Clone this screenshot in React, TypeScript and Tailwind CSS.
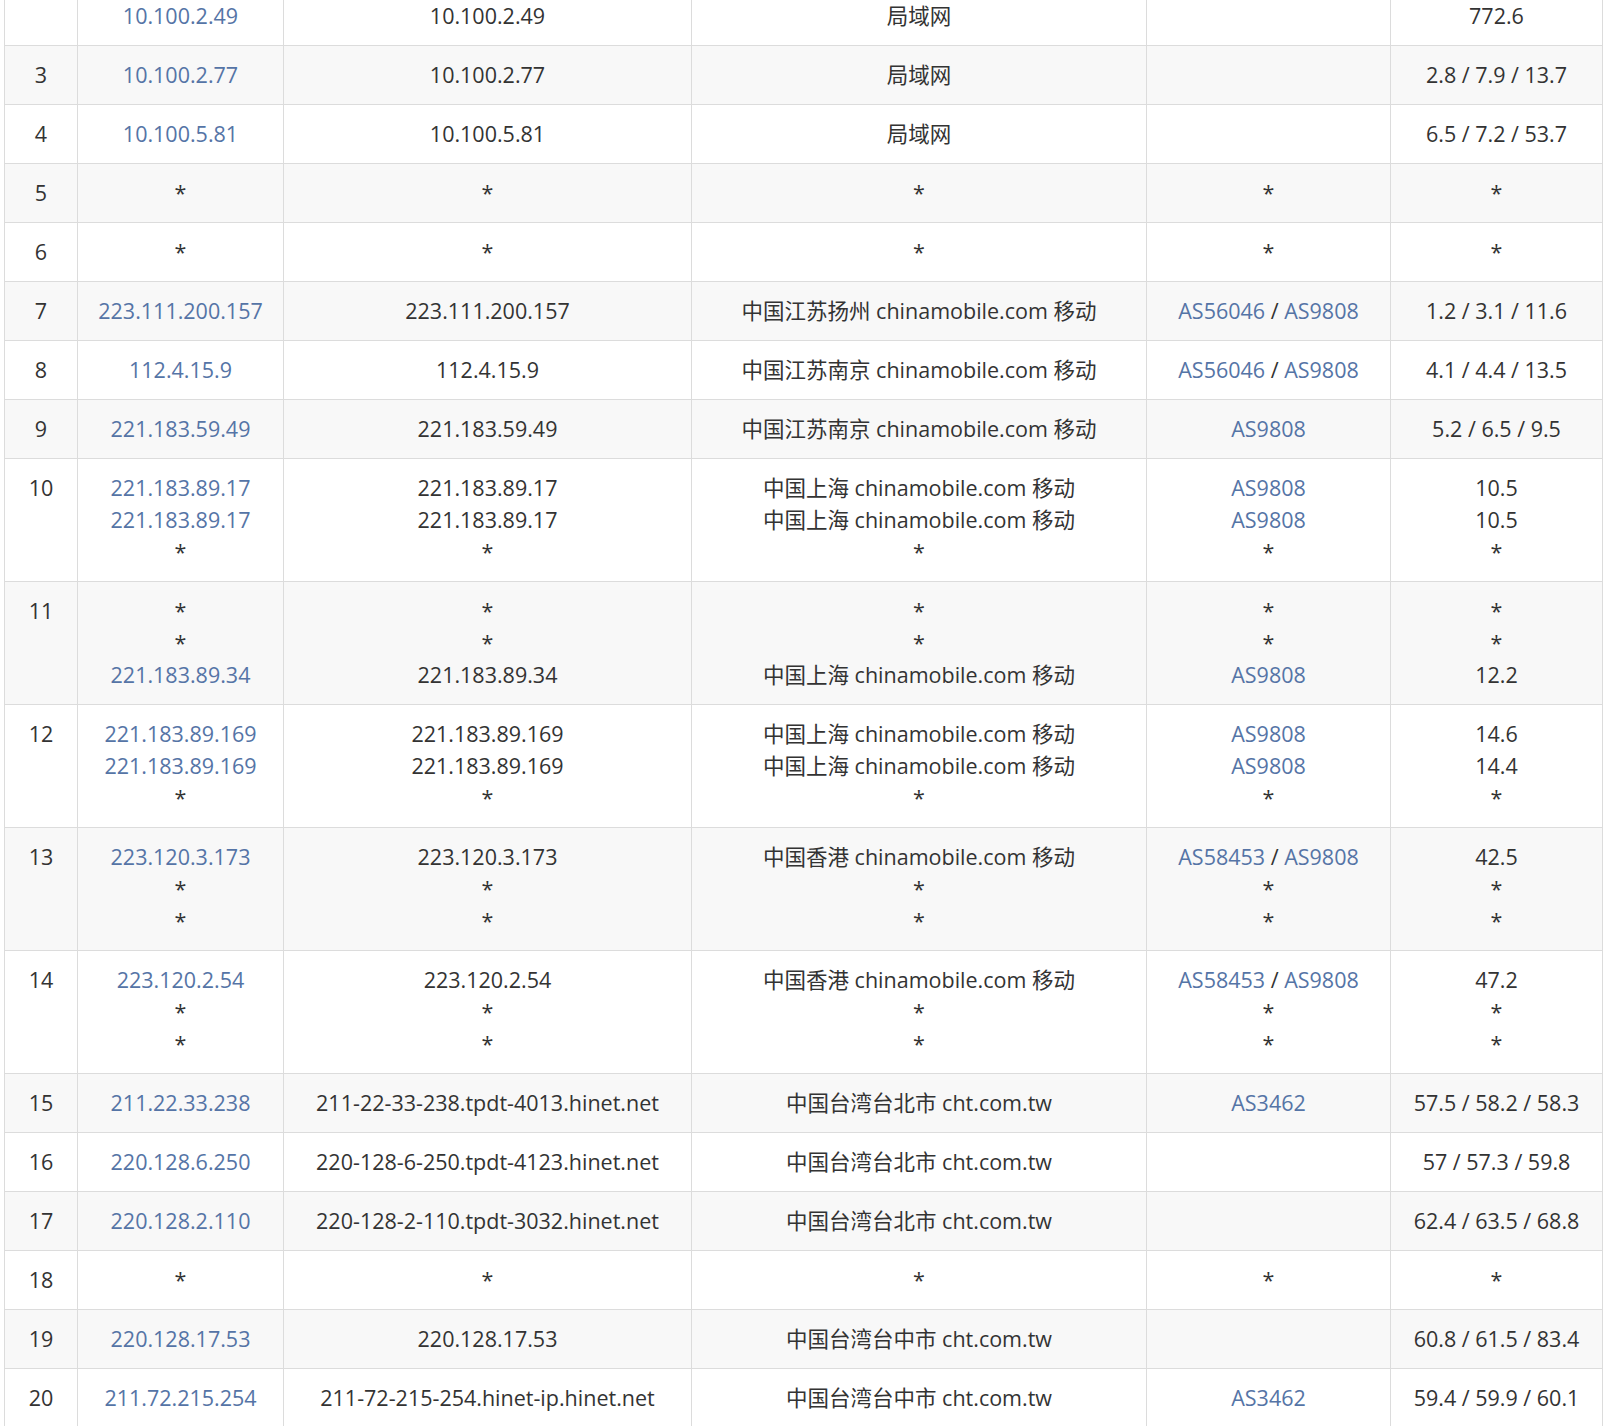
const S = "*";
type Cell = string | string[];
type Row = { n: string; ip: Cell; host: Cell; loc: Cell; as: Cell; rtt: Cell };

const rows: Row[] = [
  { n: "", ip: "10.100.2.49", host: "10.100.2.49", loc: "局域网", as: "", rtt: "772.6" },
  { n: "3", ip: "10.100.2.77", host: "10.100.2.77", loc: "局域网", as: "", rtt: "2.8 / 7.9 / 13.7" },
  { n: "4", ip: "10.100.5.81", host: "10.100.5.81", loc: "局域网", as: "", rtt: "6.5 / 7.2 / 53.7" },
  { n: "5", ip: S, host: S, loc: S, as: S, rtt: S },
  { n: "6", ip: S, host: S, loc: S, as: S, rtt: S },
  { n: "7", ip: "223.111.200.157", host: "223.111.200.157", loc: "中国江苏扬州 chinamobile.com 移动", as: "AS56046 / AS9808", rtt: "1.2 / 3.1 / 11.6" },
  { n: "8", ip: "112.4.15.9", host: "112.4.15.9", loc: "中国江苏南京 chinamobile.com 移动", as: "AS56046 / AS9808", rtt: "4.1 / 4.4 / 13.5" },
  { n: "9", ip: "221.183.59.49", host: "221.183.59.49", loc: "中国江苏南京 chinamobile.com 移动", as: "AS9808", rtt: "5.2 / 6.5 / 9.5" },
  { n: "10", ip: ["221.183.89.17", "221.183.89.17", S], host: ["221.183.89.17", "221.183.89.17", S], loc: ["中国上海 chinamobile.com 移动", "中国上海 chinamobile.com 移动", S], as: ["AS9808", "AS9808", S], rtt: ["10.5", "10.5", S] },
  { n: "11", ip: [S, S, "221.183.89.34"], host: [S, S, "221.183.89.34"], loc: [S, S, "中国上海 chinamobile.com 移动"], as: [S, S, "AS9808"], rtt: [S, S, "12.2"] },
  { n: "12", ip: ["221.183.89.169", "221.183.89.169", S], host: ["221.183.89.169", "221.183.89.169", S], loc: ["中国上海 chinamobile.com 移动", "中国上海 chinamobile.com 移动", S], as: ["AS9808", "AS9808", S], rtt: ["14.6", "14.4", S] },
  { n: "13", ip: ["223.120.3.173", S, S], host: ["223.120.3.173", S, S], loc: ["中国香港 chinamobile.com 移动", S, S], as: ["AS58453 / AS9808", S, S], rtt: ["42.5", S, S] },
  { n: "14", ip: ["223.120.2.54", S, S], host: ["223.120.2.54", S, S], loc: ["中国香港 chinamobile.com 移动", S, S], as: ["AS58453 / AS9808", S, S], rtt: ["47.2", S, S] },
  { n: "15", ip: "211.22.33.238", host: "211-22-33-238.tpdt-4013.hinet.net", loc: "中国台湾台北市 cht.com.tw", as: "AS3462", rtt: "57.5 / 58.2 / 58.3" },
  { n: "16", ip: "220.128.6.250", host: "220-128-6-250.tpdt-4123.hinet.net", loc: "中国台湾台北市 cht.com.tw", as: "", rtt: "57 / 57.3 / 59.8" },
  { n: "17", ip: "220.128.2.110", host: "220-128-2-110.tpdt-3032.hinet.net", loc: "中国台湾台北市 cht.com.tw", as: "", rtt: "62.4 / 63.5 / 68.8" },
  { n: "18", ip: S, host: S, loc: S, as: S, rtt: S },
  { n: "19", ip: "220.128.17.53", host: "220.128.17.53", loc: "中国台湾台中市 cht.com.tw", as: "", rtt: "60.8 / 61.5 / 83.4" },
  { n: "20", ip: "211.72.215.254", host: "211-72-215-254.hinet-ip.hinet.net", loc: "中国台湾台中市 cht.com.tw", as: "AS3462", rtt: "59.4 / 59.9 / 60.1" },
];

const link = "text-[#5574a6]";

function Lines({ v, blue, asLinks }: { v: Cell; blue?: boolean; asLinks?: boolean }) {
  const arr = Array.isArray(v) ? v : [v];
  return (
    <>
      {arr.map((s, i) => (
        <div key={i} className="h-[32px]">
          {s === S ? (
            <span className="text-[#333]">*</span>
          ) : asLinks ? (
            s.split(" / ").map((p, j) => (
              <span key={j}>
                {j > 0 && <span className="text-[#333]"> / </span>}
                <span className={link}>{p}</span>
              </span>
            ))
          ) : (
            <span className={blue ? link : ""}>{s}</span>
          )}
        </div>
      ))}
    </>
  );
}

export default function App() {
  const td = "border border-[#dcdcdc] px-2 pt-[13px] pb-[13px] align-top text-center";
  return (
    <div className="bg-white px-[4px] -mt-[14px] text-[21.5px] leading-[32px] text-[#333]" style={{ fontFamily: '"Open Sans", "Noto Sans CJK SC", sans-serif' }}>
      <table className="w-[1598px] border-collapse table-fixed">
        <colgroup>
          <col className="w-[73px]" />
          <col className="w-[206px]" />
          <col className="w-[408px]" />
          <col className="w-[455px]" />
          <col className="w-[244px]" />
          <col className="w-[212px]" />
        </colgroup>
        <tbody>
          {rows.map((r, i) => (
            <tr key={i} className={i % 2 === 1 ? "bg-[#f8f8f8]" : "bg-white"}>
              <td className={`${td} text-center`}>{r.n}</td>
              <td className={td}><Lines v={r.ip} blue /></td>
              <td className={td}><Lines v={r.host} /></td>
              <td className={td}><Lines v={r.loc} /></td>
              <td className={td}><Lines v={r.as} asLinks /></td>
              <td className={td}><Lines v={r.rtt} /></td>
            </tr>
          ))}
        </tbody>
      </table>
    </div>
  );
}
